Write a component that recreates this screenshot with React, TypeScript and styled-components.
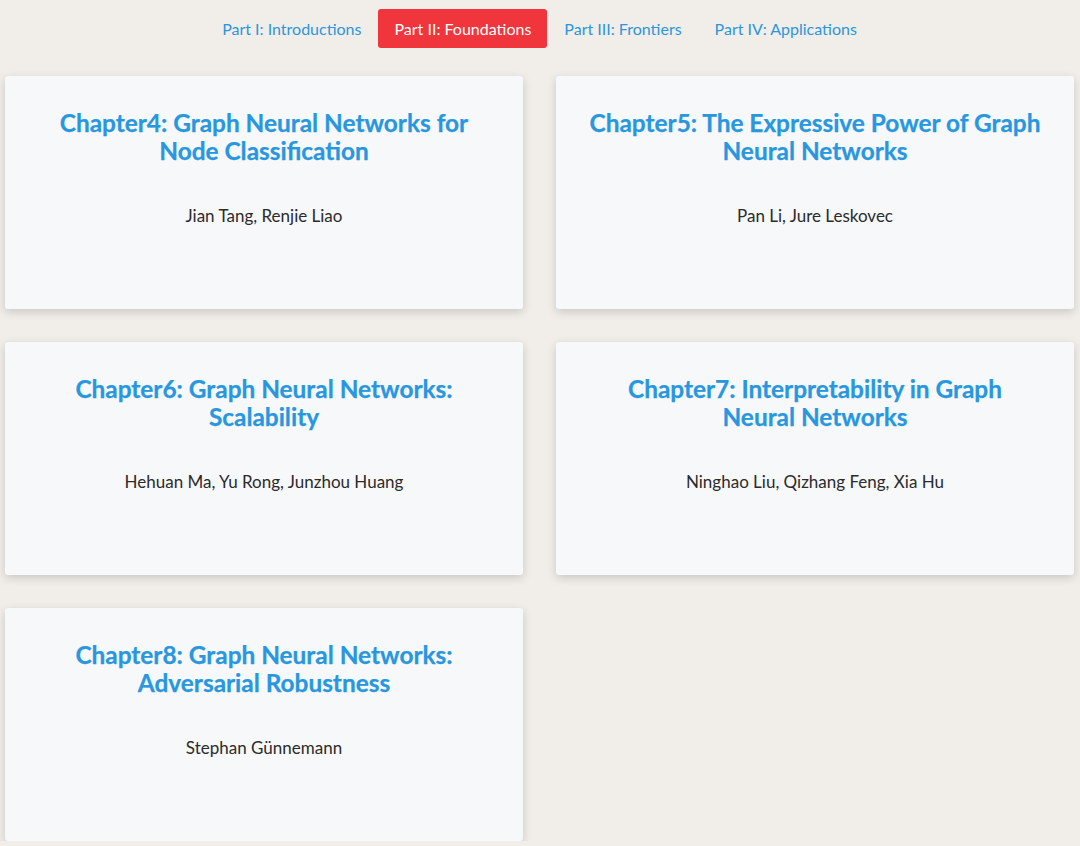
import styled, { createGlobalStyle } from 'styled-components';

const GlobalStyle = createGlobalStyle`
  html, body {
    margin: 0;
    padding: 0;
    background: #f1eee9;
    font-family: Lato, "Open Sans", sans-serif;
  }
`;

const Page = styled.div`
  padding: 9px 6px 0 5px;
`;

const Nav = styled.nav`
  display: flex;
  justify-content: center;
  gap: 1px;
  margin-bottom: 28px;
`;

const Tab = styled.a<{ $active?: boolean }>`
  display: block;
  height: 39px;
  line-height: 39px;
  padding: 0 16px;
  border-radius: 3px;
  font-size: 16px;
  text-decoration: none;
  cursor: pointer;
  color: ${(p) => (p.$active ? '#fff' : '#2b96df')};
  background: ${(p) => (p.$active ? '#f0353c' : 'transparent')};
`;

const Grid = styled.section`
  display: grid;
  grid-template-columns: 518px 518px;
  gap: 33px;
`;

const Card = styled.article`
  height: 233px;
  box-sizing: border-box;
  padding: 33px 33.25px 0;
  background: #f7f8fa;
  border-radius: 3px;
  box-shadow: 0 3px 10px rgba(0, 0, 0, 0.16);
  text-align: center;
`;

const Title = styled.h2`
  margin: 0 0 39px;
  font-size: 24.4px;
  line-height: 28px;
  font-weight: 700;
  color: #2797e0;
  -webkit-text-stroke: 0.25px #2797e0;
`;

const Authors = styled.p`
  margin: 0;
  font-size: 17px;
  line-height: 24px;
  color: #2b2b2b;
`;

const tabs = [
  'Part I: Introductions',
  'Part II: Foundations',
  'Part III: Frontiers',
  'Part IV: Applications',
];

const chapters = [
  {
    title: 'Chapter4: Graph Neural Networks for Node Classification',
    authors: 'Jian Tang, Renjie Liao',
  },
  {
    title: 'Chapter5: The Expressive Power of Graph Neural Networks',
    authors: 'Pan Li, Jure Leskovec',
  },
  {
    title: 'Chapter6: Graph Neural Networks: Scalability',
    authors: 'Hehuan Ma, Yu Rong, Junzhou Huang',
  },
  {
    title: 'Chapter7: Interpretability in Graph Neural Networks',
    authors: 'Ninghao Liu, Qizhang Feng, Xia Hu',
  },
  {
    title: 'Chapter8: Graph Neural Networks: Adversarial Robustness',
    authors: 'Stephan Günnemann',
  },
];

const App = () => {
  return (
    <>
      <GlobalStyle />
      <Page>
        <Nav>
          {tabs.map((t, i) => (
            <Tab key={t} $active={i === 1}>
              {t}
            </Tab>
          ))}
        </Nav>
        <Grid>
          {chapters.map((c) => (
            <Card key={c.title}>
              <Title>{c.title}</Title>
              <Authors>{c.authors}</Authors>
            </Card>
          ))}
        </Grid>
      </Page>
    </>
  );
};

export default App;
